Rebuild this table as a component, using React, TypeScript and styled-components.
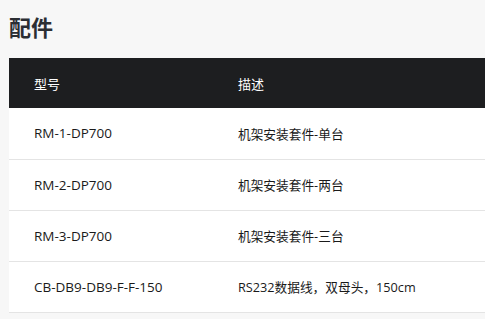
import styled, { createGlobalStyle } from 'styled-components'

const GlobalStyle = createGlobalStyle`
    html, body {
        margin: 0;
        padding: 0;
        background: #f7f7f7;
    }
    body {
        font-family: "Open Sans", "Noto Sans CJK SC", sans-serif;
        color: #222;
    }
`

interface Part {
    model: string;
    description: string;
}

const parts: Part[] = [
    { model: 'RM-1-DP700', description: '机架安装套件-单台' },
    { model: 'RM-2-DP700', description: '机架安装套件-两台' },
    { model: 'RM-3-DP700', description: '机架安装套件-三台' },
    { model: 'CB-DB9-DB9-F-F-150', description: 'RS232数据线，双母头，150cm' },
]

const Page = styled.div`
    padding: 9px 0 0 9px;
    overflow: hidden;
`

const Title = styled.h2`
    margin: 0 0 15px 0;
    font-family: "Noto Sans CJK SC", sans-serif;
    font-size: 22px;
    font-weight: 700;
    line-height: 34px;
    color: #2b2e33;
`

const Table = styled.table`
    width: 600px;
    border-collapse: collapse;
    background: #fff;
`

const HeadCell = styled.th<{ $narrow?: boolean }>`
    height: 50px;
    padding: 0 0 0 25px;
    width: ${({ $narrow }) => ($narrow ? '204px' : 'auto')};
    box-sizing: border-box;
    background: #1d1e20;
    color: #fff;
    font-family: "Noto Sans CJK SC", sans-serif;
    font-size: 13px;
    font-weight: 400;
    text-align: left;
    vertical-align: middle;
`

const Row = styled.tr`
    border-bottom: 1px solid #e4e4e4;
`

const Cell = styled.td<{ $narrow?: boolean }>`
    height: 51px;
    padding: 0 0 0 25px;
    width: ${({ $narrow }) => ($narrow ? '204px' : 'auto')};
    box-sizing: border-box;
    font-family: "Open Sans", "Noto Sans CJK SC", sans-serif;
    font-size: ${({ $narrow }) => ($narrow ? '13.5px' : '12.7px')};
    color: #1a1a1a;
    vertical-align: middle;
`

export default function App() {
    return (
        <Page>
            <GlobalStyle />
            <Title>配件</Title>
            <Table>
                <thead>
                    <tr>
                        <HeadCell $narrow>型号</HeadCell>
                        <HeadCell>描述</HeadCell>
                    </tr>
                </thead>
                <tbody>
                    {parts.map((part, index) => (
                        <Row key={`part_${index}`}>
                            <Cell $narrow>{part.model}</Cell>
                            <Cell>{part.description}</Cell>
                        </Row>
                    ))}
                </tbody>
            </Table>
        </Page>
    )
}
